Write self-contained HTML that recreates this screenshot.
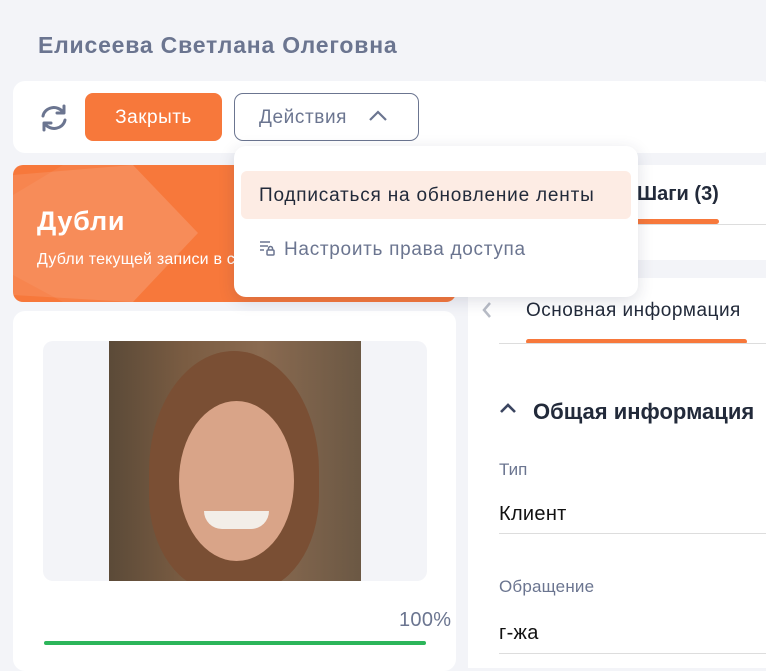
<!DOCTYPE html>
<html><head><meta charset="utf-8"><style>
*{margin:0;padding:0;box-sizing:border-box}
body{width:766px;height:661px;overflow:hidden;background:#f3f4f8;font-family:"Liberation Sans",sans-serif;position:relative}
.a{position:absolute;white-space:nowrap}
</style></head><body>
<div class="a" style="left:38px;top:32px;font-size:23px;letter-spacing:0.8px;font-weight:bold;color:#6b7590">Елисеева Светлана Олеговна</div>
<div class="a" style="left:13px;top:81px;width:760px;height:72px;background:#fff;border-radius:12px"></div>
<svg class="a" style="left:38px;top:102px" width="32" height="32" viewBox="0 0 32 32" fill="none" stroke="#6b7590" stroke-width="3" stroke-linecap="round"><path d="M5 14a11 10 0 0 1 20-4"/><path d="M26 4v7h-7" stroke-linejoin="round"/><path d="M27 18a11 10 0 0 1-20 4"/><path d="M6 28v-7h7" stroke-linejoin="round"/></svg>
<div class="a" style="left:85px;top:93px;width:137px;height:48px;background:#f7783b;border-radius:8px;color:#fff;font-size:19px;letter-spacing:0.5px;text-align:center;line-height:50px">Закрыть</div>
<div class="a" style="left:234px;top:93px;width:185px;height:48px;border:1.5px solid #6b7590;border-radius:9px;color:#6b7590;font-size:19px;letter-spacing:0.6px;line-height:47px;padding-left:24px">Действия</div>
<svg class="a" style="left:369px;top:110px" width="18" height="12" viewBox="0 0 18 12" fill="none" stroke="#6b7590" stroke-width="2.2"><path d="M1 10l8-8 8 8"/></svg>
<div class="a" style="left:13px;top:165px;width:443px;height:137px;background:#f7783b;border-radius:10px;overflow:hidden">
<svg width="443" height="137" style="position:absolute;left:0;top:0"><path d="M0 10L120 0L185 68L120 137L0 130Z" fill="#fff" opacity="0.1"/><path d="M0 30L50 0h70l65 68-65 69H50L0 110Z" fill="#fff" opacity="0.06"/></svg>
<div class="a" style="left:24px;top:41px;color:#fff;font-size:27px;letter-spacing:0.8px;font-weight:bold">Дубли</div>
<div class="a" style="left:24px;top:86px;color:#fff;font-size:16px;letter-spacing:0.2px">Дубли текущей записи в системе</div>
</div>
<div class="a" style="left:13px;top:311px;width:443px;height:360px;background:#fff;border-radius:12px"></div>
<div class="a" style="left:43px;top:341px;width:384px;height:240px;background:#f3f4f8;border-radius:10px"></div>
<div class="a" style="left:109px;top:341px;width:252px;height:240px;background:linear-gradient(90deg,#5b4a38,#7a5c42 30%,#8a6a50 60%,#6b5844);overflow:hidden">
<div class="a" style="left:40px;top:10px;width:170px;height:240px;border-radius:50% 50% 40% 40%;background:#7a4f34"></div>
<div class="a" style="left:70px;top:60px;width:115px;height:160px;border-radius:50%;background:#d9a488"></div>
<div class="a" style="left:95px;top:170px;width:65px;height:18px;border-radius:0 0 30px 30px;background:#f3eee8"></div>
</div>
<div class="a" style="left:399px;top:609px;color:#6b7590;font-size:20px;letter-spacing:0.3px">100%</div>
<div class="a" style="left:44px;top:641px;width:382px;height:4px;background:#2cb55a;border-radius:2px"></div>
<div class="a" style="left:468px;top:165px;width:300px;height:95px;background:#fff"></div>
<div class="a" style="left:637px;top:183px;font-size:20px;font-weight:bold;color:#222a3a">Шаги (3)</div>
<div class="a" style="left:600px;top:219px;width:119px;height:5px;background:#f7783b;border-radius:3px"></div>
<div class="a" style="left:600px;top:224px;width:166px;height:1px;background:#ddd"></div>
<div class="a" style="left:468px;top:278px;width:300px;height:390px;background:#fff"></div>
<svg class="a" style="left:481px;top:301px" width="12" height="18" viewBox="0 0 12 18" fill="none" stroke="#b8bcc6" stroke-width="2.5"><path d="M9 2L3 9l6 7"/></svg>
<div class="a" style="left:526px;top:300px;font-size:19px;letter-spacing:0.5px;color:#222a3a">Основная информация</div>
<div class="a" style="left:526px;top:339px;width:221px;height:5px;background:#f7783b;border-radius:3px"></div>
<div class="a" style="left:499px;top:343px;width:267px;height:1px;background:#ddd"></div>
<svg class="a" style="left:499px;top:402px" width="18" height="12" viewBox="0 0 18 12" fill="none" stroke="#3b4560" stroke-width="2.6"><path d="M2 10l7-7 7 7"/></svg>
<div class="a" style="left:533px;top:399px;font-size:22px;font-weight:bold;color:#222a3a">Общая информация</div>
<div class="a" style="left:499px;top:460px;font-size:17px;color:#6b7590">Тип</div>
<div class="a" style="left:499px;top:503px;font-size:20px;letter-spacing:0.3px;color:#111">Клиент</div>
<div class="a" style="left:499px;top:533px;width:267px;height:1px;background:#ddd"></div>
<div class="a" style="left:499px;top:577px;font-size:17px;letter-spacing:0.2px;color:#6b7590">Обращение</div>
<div class="a" style="left:499px;top:622px;font-size:20px;letter-spacing:0.3px;color:#111">г-жа</div>
<div class="a" style="left:499px;top:653px;width:267px;height:1px;background:#ddd"></div>
<div class="a" style="left:234px;top:146px;width:404px;height:151px;background:#fff;border-radius:12px;box-shadow:0 4px 16px rgba(40,50,80,.15)"></div>
<div class="a" style="left:241px;top:171px;width:390px;height:48px;background:#fdece4;border-radius:6px"></div>
<div class="a" style="left:259px;top:185px;font-size:19px;letter-spacing:0.8px;color:#222a3a">Подписаться на обновление ленты</div>
<svg class="a" style="left:259px;top:240px" width="16" height="16" viewBox="0 0 16 16" fill="none" stroke="#6b7590" stroke-width="1.5"><path d="M1 2h10M1 6h8M1 10h4"/><rect x="8" y="10" width="7" height="5" rx="1"/><path d="M9.5 10V8.5a2 2 0 0 1 4 0V10"/></svg>
<div class="a" style="left:284px;top:239px;font-size:19px;letter-spacing:0.7px;color:#6b7590">Настроить права доступа</div>
</body></html>
